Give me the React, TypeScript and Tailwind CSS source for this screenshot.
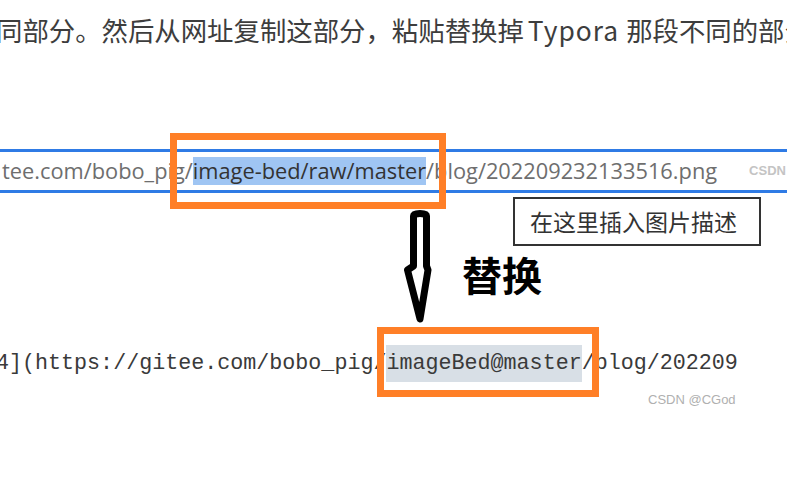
export default function App() {
  return (
    <div className="relative h-[489px] w-[787px] overflow-hidden bg-white">
      {/* article sentence, cut off at both sides */}
      <div className="ml-[-4px] whitespace-nowrap pt-[15px] font-['Noto_Sans_CJK_SC','Noto_Sans',sans-serif] text-[26.4px] leading-[30px] text-[#3d3d3d]">
        同部分。然后从网址复制这部分，粘贴替换掉
        <span className="ml-[4px] mr-[7px] tracking-[1px]">Typora</span>
        那段不同的部分
      </div>

      {/* address bar from the screenshot */}
      <div className="mt-[104px] flex h-[44px] items-center whitespace-nowrap border-y-[3px] border-[#2f7be5] font-['Open_Sans',sans-serif] text-[21.8px] text-[#6e6e6e]">
        <span className="pl-[2px]">tee.com/bobo_pig/</span>
        <span className="inline-block bg-[#9fc5f3] leading-[28px] text-[#333]">image-bed/raw/master</span>
        <span>/blog/202209232133516.png</span>
        <span className="ml-[32px] font-['Liberation_Sans',sans-serif] text-[13px] font-bold text-[#c4c4c4]">CSDN</span>
      </div>

      <div className="flex h-[135px] items-start">
        <svg className="ml-[403px] mt-[17px]" width="30" height="118" viewBox="0 0 30 118">
          <path
            d="M10.5 6 Q10.5 3.5 17 3.5 Q23.5 3.5 23.5 6 L23.5 56 L25 60 L17 109 L4.5 60 L10.5 56 Z"
            fill="white"
            stroke="black"
            strokeWidth="7"
            strokeLinejoin="round"
          />
        </svg>
        <div className="ml-[29px] flex flex-col items-start">
          <div className="ml-[51px] mt-[4px] flex h-[49px] w-[248px] items-center border-2 border-[#333] pl-[15px] font-['Noto_Sans_CJK_SC',sans-serif] text-[23px] text-[#333]">
            在这里插入图片描述
          </div>
          <div className="mt-[8px] font-['Noto_Sans_CJK_SC',sans-serif] text-[40px] font-bold leading-[40px] text-black">
            替换
          </div>
        </div>
      </div>

      {/* markdown source line */}
      <div className="ml-[-4px] mt-[17px] h-[37px] whitespace-nowrap font-['Liberation_Mono',monospace] text-[21.7px] leading-[37px] text-[#3a3a3a]">
        <span>4](https://gitee.com/bobo_pig/</span>
        <span className="inline-block bg-[#d8dfe6] leading-[37px]">imageBed@master</span>
        <span>/blog/202209</span>
      </div>

      <div className="ml-[648px] mt-[11px] font-['Liberation_Sans',sans-serif] text-[13px] leading-[13px] text-[#b0b0b0]">
        CSDN @CGod
      </div>

      {/* orange annotation frames */}
      <div className="absolute left-[170px] top-[133px] h-[76px] w-[276px] border-[7px] border-[#ff7f27]" />
      <div className="absolute left-[377px] top-[327px] h-[70px] w-[222px] border-[7px] border-[#ff7f27]" />
    </div>
  );
}
